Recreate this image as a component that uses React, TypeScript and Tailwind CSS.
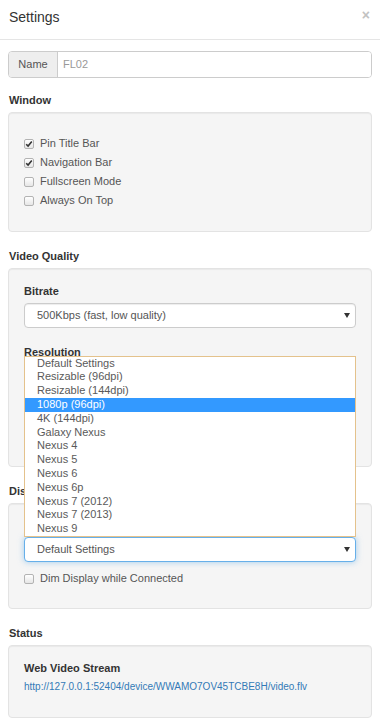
const resolutions = [
  'Default Settings',
  'Resizable (96dpi)',
  'Resizable (144dpi)',
  '1080p (96dpi)',
  '4K (144dpi)',
  'Galaxy Nexus',
  'Nexus 4',
  'Nexus 5',
  'Nexus 6',
  'Nexus 6p',
  'Nexus 7 (2012)',
  'Nexus 7 (2013)',
  'Nexus 9',
];

function CheckBox({ checked }: { checked?: boolean }) {
  return (
    <span className="w-[10px] h-[10px] rounded-[2px] border border-[#b3b3b3] bg-gradient-to-b from-white to-[#e6e6e6] flex items-center justify-center shrink-0">
      {checked && (
        <svg width="8" height="8" viewBox="0 0 8 8">
          <path d="M1.2 4.2 L3.1 6.1 L6.8 1.6" fill="none" stroke="#333" strokeWidth="1.6" />
        </svg>
      )}
    </span>
  );
}

function CheckRow({ label, checked }: { label: string; checked?: boolean }) {
  return (
    <label className="flex items-center gap-[6px] h-[19px] text-[#555]">
      <CheckBox checked={checked} />
      <span>{label}</span>
    </label>
  );
}

function Arrow() {
  return (
    <svg width="6" height="5" viewBox="0 0 6 5">
      <path d="M0 0 H6 L3 5 Z" fill="#333" />
    </svg>
  );
}

function SelectBox({ value, focused }: { value: string; focused?: boolean }) {
  return (
    <div
      className={
        focused
          ? 'h-[25px] rounded-[4px] border border-[#66afe9] shadow-[0_0_6px_rgba(102,175,233,0.6)] bg-white flex items-center justify-between pl-[12px] pr-[5px] text-[#555]'
          : 'h-[25px] rounded-[4px] border border-[#ccc] shadow-[inset_0_1px_1px_rgba(0,0,0,0.075)] bg-white flex items-center justify-between pl-[12px] pr-[5px] text-[#555]'
      }
    >
      <span>{value}</span>
      <Arrow />
    </div>
  );
}

function Heading({ children, first }: { children: string; first?: boolean }) {
  return (
    <h5 className={(first ? 'mt-[12px]' : 'mt-[14px]') + ' h-[22px] leading-[20px] pl-[1px] font-bold text-[#333]'}>
      {children}
    </h5>
  );
}

function Well({ children, className }: { children: React.ReactNode; className?: string }) {
  return (
    <div className={'rounded-[4px] border border-[#e3e3e3] bg-[#f5f5f5] shadow-[inset_0_1px_1px_rgba(0,0,0,0.05)] px-[15px] ' + (className ?? '')}>
      {children}
    </div>
  );
}

export default function App() {
  return (
    <div className="min-h-screen bg-white font-['Liberation_Sans',Arial,sans-serif] text-[11px] text-[#333]">
      {/* Header */}
      <div className="h-[40px] border-b border-[#e5e5e5] flex items-start justify-between pl-[9px] pr-[10px]">
        <h4 className="text-[14px] leading-[18px] mt-[8px] text-[#333]">Settings</h4>
        <button className="text-[#c2c2c2] text-[14px] font-bold leading-[14px] mt-[8px]">×</button>
      </div>

      <div className="px-[8px] pt-[11px] pb-[10px]">
        {/* Name */}
        <div className="flex h-[27px] rounded-[4px] border border-[#ccc] overflow-hidden">
          <span className="w-[49px] bg-[#eee] border-r border-[#ccc] text-[#555] flex items-center justify-center">Name</span>
          <span className="flex-1 bg-white text-[#999] flex items-center pl-[5px]">FL02</span>
        </div>

        <Heading first>Window</Heading>
        <Well className="py-[21px]">
          <CheckRow label="Pin Title Bar" checked />
          <CheckRow label="Navigation Bar" checked />
          <CheckRow label="Fullscreen Mode" />
          <CheckRow label="Always On Top" />
        </Well>

        <Heading>Video Quality</Heading>
        <Well className="pt-[14px] pb-[77px]">
          <div className="font-bold leading-[16px] mb-[4px]">Bitrate</div>
          <SelectBox value="500Kbps (fast, low quality)" />
          <div className="font-bold leading-[16px] mt-[16px] mb-[4px]">Resolution</div>
          <SelectBox value="Default Settings" />
        </Well>

        <Heading>Display</Heading>
        <Well className="pt-[14px] pb-[20px]">
          <div className="h-[16px] mb-[3px]" />
          <div className="relative">
            <SelectBox value="Default Settings" focused />
            {/* open option list of the focused select */}
            <ul className="absolute bottom-full left-0 right-0 z-10 bg-white border border-[#e4c28c] text-[#5a5a5a]">
              {resolutions.map((r) => (
                <li
                  key={r}
                  className={
                    r === '1080p (96dpi)'
                      ? 'h-[13.8px] leading-[13.8px] pl-[12px] bg-[#3399ff] text-white'
                      : 'h-[13.8px] leading-[13.8px] pl-[12px]'
                  }
                >
                  {r}
                </li>
              ))}
            </ul>
          </div>
          <div className="mt-[7px]">
            <CheckRow label="Dim Display while Connected" />
          </div>
        </Well>

        <Heading>Status</Heading>
        <Well className="pt-[14px] pb-[22px]">
          <div className="font-bold leading-[16px] mb-[3px]">Web Video Stream</div>
          <a className="block leading-[16px] text-[10px] text-[#337ab7]" href="#">
            http://127.0.0.1:52404/device/WWAMO7OV45TCBE8H/video.flv
          </a>
        </Well>
      </div>
    </div>
  );
}
